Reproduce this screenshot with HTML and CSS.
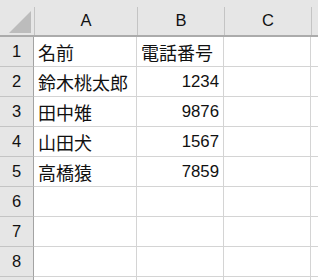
FILE: index.html
```html
<!DOCTYPE html>
<html lang="ja">
<head>
<meta charset="utf-8">
<link rel="stylesheet" href="styles.css">
</head>
<body>
<div class="sheet">
  <div class="hrow">
    <div class="corner"><svg width="34" height="28" viewBox="0 0 34 28"><polygon points="31,4 9,26 31,26" fill="#bcbcbc"/></svg></div>
    <div class="ch ca">A</div>
    <div class="ch cb">B</div>
    <div class="ch cc">C</div>
    <div class="ch cd"></div>
  </div>
  <div class="row">
    <div class="rh">1</div>
    <div class="cell ca txt">名前</div>
    <div class="cell cb txt">電話番号</div>
    <div class="cell cc"></div>
    <div class="cell cd"></div>
  </div>
  <div class="row">
    <div class="rh">2</div>
    <div class="cell ca txt">鈴木桃太郎</div>
    <div class="cell cb num">1234</div>
    <div class="cell cc"></div>
    <div class="cell cd"></div>
  </div>
  <div class="row">
    <div class="rh">3</div>
    <div class="cell ca txt">田中雉</div>
    <div class="cell cb num">9876</div>
    <div class="cell cc"></div>
    <div class="cell cd"></div>
  </div>
  <div class="row">
    <div class="rh">4</div>
    <div class="cell ca txt">山田犬</div>
    <div class="cell cb num">1567</div>
    <div class="cell cc"></div>
    <div class="cell cd"></div>
  </div>
  <div class="row">
    <div class="rh">5</div>
    <div class="cell ca txt">高橋猿</div>
    <div class="cell cb num">7859</div>
    <div class="cell cc"></div>
    <div class="cell cd"></div>
  </div>
  <div class="row">
    <div class="rh">6</div>
    <div class="cell ca"></div>
    <div class="cell cb"></div>
    <div class="cell cc"></div>
    <div class="cell cd"></div>
  </div>
  <div class="row">
    <div class="rh">7</div>
    <div class="cell ca"></div>
    <div class="cell cb"></div>
    <div class="cell cc"></div>
    <div class="cell cd"></div>
  </div>
  <div class="row">
    <div class="rh">8</div>
    <div class="cell ca"></div>
    <div class="cell cb"></div>
    <div class="cell cc"></div>
    <div class="cell cd"></div>
  </div>
  <div class="row">
    <div class="rh"></div>
    <div class="cell ca"></div>
    <div class="cell cb"></div>
    <div class="cell cc"></div>
    <div class="cell cd"></div>
  </div>
</div>
</body>
</html>
```

FILE: styles.css
```css
html, body {
  margin: 0;
  padding: 0;
  background: #ffffff;
  overflow: hidden;
}
.sheet {
  width: 318px;
  height: 280px;
  overflow: hidden;
  font-family: "Liberation Sans", "Noto Sans CJK JP", sans-serif;
  color: #111111;
}
.hrow {
  display: flex;
  height: 28px;
  padding-top: 7px;
  background: #e6e6e6;
  border-bottom: 2px solid #ababab;
}
.corner {
  flex: 0 0 34px;
  width: 34px;
  border-right: 1px solid #c4c4c4;
  display: flex;
}
.ch {
  border-right: 1px solid #c4c4c4;
  display: flex;
  align-items: center;
  justify-content: center;
  font-size: 16.5px;
  padding-bottom: 1px;
  box-sizing: border-box;
}
.ca { flex: 0 0 103px; }
.cb { flex: 0 0 87px; }
.cc { flex: 0 0 87px; }
.cd { flex: 1 0 10px; border-right: none; }
.row {
  display: flex;
  height: 30px;
}
.rh {
  flex: 0 0 34px;
  background: #e6e6e6;
  border-right: 1px solid #a3a3a3;
  border-bottom: 1px solid #c4c4c4;
  display: flex;
  align-items: center;
  justify-content: center;
  font-size: 16.5px;
  box-sizing: border-box;
}
.cell {
  border-right: 1px solid #d4d4d4;
  border-bottom: 1px solid #d4d4d4;
  box-sizing: border-box;
  display: flex;
  align-items: center;
  padding: 0 4px;
}
.cell.cd { border-right: none; }
.txt {
  font-family: "Noto Sans CJK JP", sans-serif;
  font-size: 18px;
  padding-left: 4px;
}
.num {
  justify-content: flex-end;
  font-size: 16.8px;
}
```
